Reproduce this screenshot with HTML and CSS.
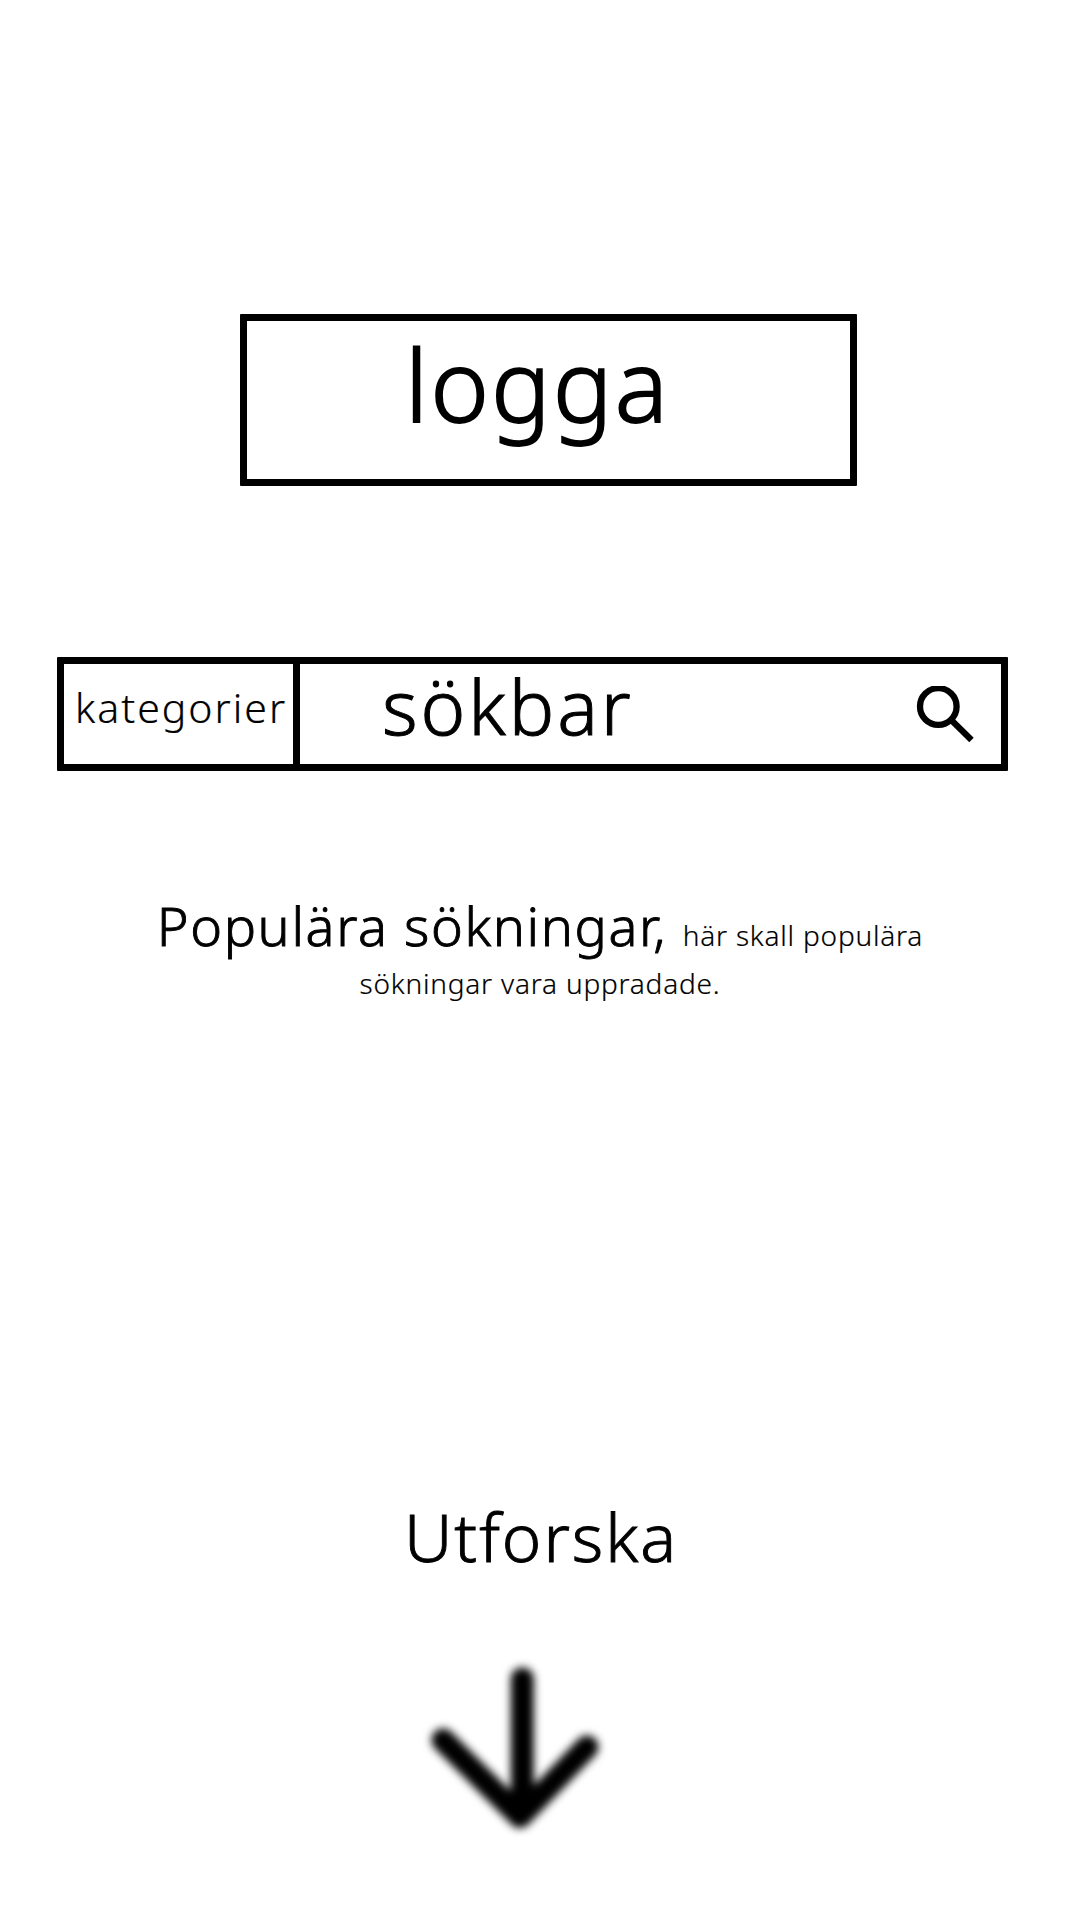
FILE: index.html
```html
<!DOCTYPE html>
<html lang="sv">
<head>
<meta charset="utf-8">
<title>Startsida</title>
<link rel="stylesheet" href="styles.css">
</head>
<body>
<main class="page">
  <header class="logo"><h1 class="logo-text">logga</h1></header>
  <div class="search">
    <div class="categories">kategorier</div>
    <div class="field">
      <span class="field-text">sökbar</span>
      <svg class="search-icon" viewBox="0 0 60 60" aria-hidden="true">
        <circle cx="23.3" cy="20.5" r="18.3"/>
        <path d="M37.5 35.2L56.5 54"/>
      </svg>
    </div>
  </div>
  <p class="popular"><span class="popular-title">Populära sökningar, </span>här skall populära<br>sökningar vara uppradade.</p>
  <section class="explore">
    <h2 class="explore-text">Utforska</h2>
    <svg class="arrow" viewBox="0 0 210 210" aria-hidden="true">
      <path d="M112.3 38V173M33 99L110 175.5L177 106"/>
    </svg>
  </section>
</main>
</body>
</html>
```
FILE: styles.css
```css
* { box-sizing: border-box; }

body {
  margin: 0;
  background: #fff;
  color: #000;
  font-family: "Noto Sans", sans-serif;
  font-weight: 300;
}

.page {
  display: flex;
  flex-direction: column;
  height: 1920px;
  padding-top: 314px;
  overflow: hidden;
}

.logo {
  width: 617px;
  height: 172px;
  margin-left: 240px;
  padding: 13px 0 0 158px;
  border: 7px solid #000;
  border-radius: 1px;
}

.logo-text {
  margin: 0;
  font-size: 99px;
  font-weight: 300;
  letter-spacing: 2.4px;
  line-height: 100px;
  -webkit-text-stroke: 1.8px #000;
}

.search {
  display: flex;
  width: 951px;
  height: 114px;
  margin: 171px 0 0 57px;
  border: 7px solid #000;
  border-radius: 1px;
}

.categories {
  width: 236px;
  padding: 23px 0 0 11px;
  border-right: 7px solid #000;
  font-size: 41px;
  letter-spacing: 2px;
  line-height: 40px;
  white-space: nowrap;
  -webkit-text-stroke: 0.2px #000;
}

.field {
  display: flex;
  flex: 1;
  justify-content: space-between;
  padding: 4px 26px 0 82px;
}

.field-text {
  font-size: 76px;
  letter-spacing: 2.9px;
  line-height: 76px;
  -webkit-text-stroke: 1px #000;
}

.search-icon {
  width: 60px;
  height: 60px;
  margin-top: 18px;
  fill: none;
  stroke: #000;
  stroke-width: 6.3px;
}

.popular {
  margin: 130px 0 0 0;
  text-align: center;
  font-size: 28px;
  letter-spacing: 0.8px;
  line-height: 48px;
  -webkit-text-stroke: 0.2px #000;
}

.popular-title {
  font-size: 54px;
  letter-spacing: 1.6px;
  -webkit-text-stroke: 0.9px #000;
}

.explore {
  margin: 496px 0 0 404px;
}

.explore-text {
  margin: 0;
  font-size: 67px;
  font-weight: 300;
  letter-spacing: 2px;
  line-height: 67px;
  -webkit-text-stroke: 0.9px #000;
}

.arrow {
  display: block;
  width: 210px;
  height: 210px;
  margin: 71px 0 0 6px;
  fill: none;
  stroke: #000;
  stroke-width: 23px;
  stroke-linecap: round;
  stroke-linejoin: round;
  filter: blur(4px);
}
```
